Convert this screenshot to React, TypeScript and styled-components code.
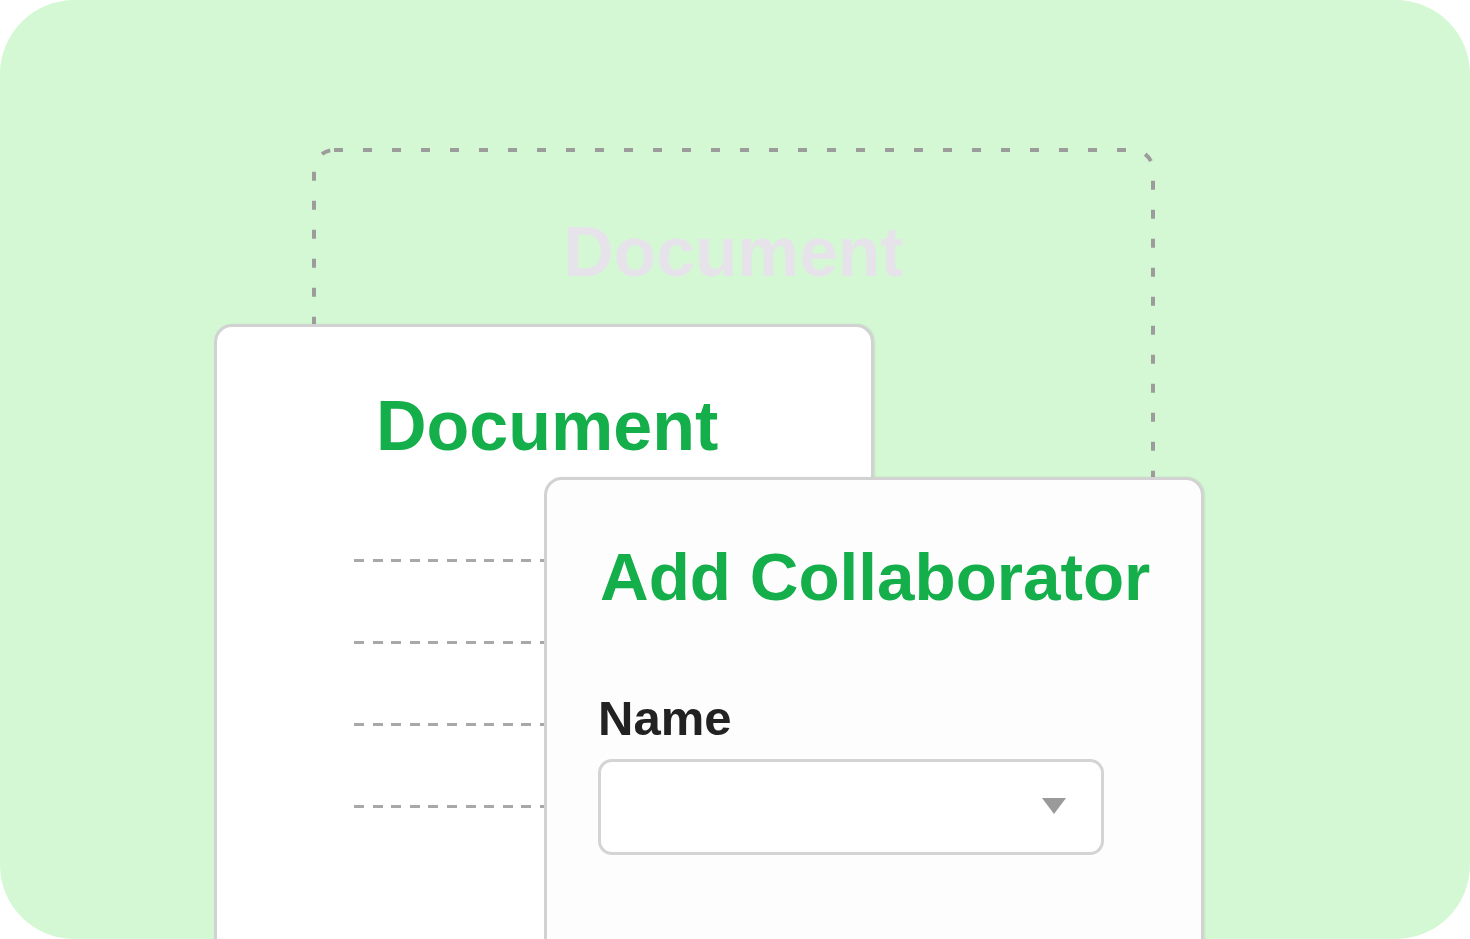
import styled, { createGlobalStyle } from "styled-components";

const GlobalStyle = createGlobalStyle`
  html, body {
    margin: 0;
    padding: 0;
    background: #ffffff;
  }
  * {
    box-sizing: border-box;
  }
`;

const Panel = styled.div`
  position: relative;
  width: 1470px;
  height: 939px;
  border-radius: 74px;
  background: #d4f8d4;
  overflow: hidden;
  padding: 148px 0 0 312px;
  font-family: "Liberation Sans", Arial, sans-serif;
`;

const Frame = styled.div`
  position: relative;
  width: 843px;
  height: 900px;
  display: flex;
  justify-content: center;
  padding-top: 70px;
`;

const FrameOutline = styled.svg`
  position: absolute;
  inset: 0;
  width: 100%;
  height: 100%;
  overflow: visible;
`;

const GhostTitle = styled.div`
  position: relative;
  font-size: 69.5px;
  line-height: 69.5px;
  font-weight: 700;
  color: #e7e3ea;
  height: 69.5px;
`;

const Card = styled.div<{ $left: number; $top: number; $bg: string }>`
  position: absolute;
  left: ${(p) => p.$left}px;
  top: ${(p) => p.$top}px;
  width: 660px;
  height: 720px;
  border: 3px solid #d2d2d2;
  border-radius: 18px;
  background: ${(p) => p.$bg};
  box-shadow: 1px 0 2px rgba(0, 0, 0, 0.08);
  display: flex;
  flex-direction: column;
`;

const DocCard = styled(Card)`
  padding: 64px 0 0 159px;
`;

const CollabCard = styled(Card)`
  padding: 63px 0 0 51px;
`;

const Heading = styled.h2<{ $size: number }>`
  margin: 0;
  font-size: ${(p) => p.$size}px;
  line-height: ${(p) => p.$size}px;
  font-weight: 700;
  color: #14ae4a;
  white-space: nowrap;
`;

const Lines = styled.div`
  display: flex;
  flex-direction: column;
  gap: 79px;
  margin: 98px 0 0 -22px;
`;

const DashLine = styled.div`
  width: 420px;
  height: 3px;
  background: repeating-linear-gradient(
    90deg,
    #a8a8a8 0 10px,
    transparent 10px 18.6px
  );
`;

const CollabHeading = styled(Heading)`
  margin-left: 2px;
`;

const Label = styled.div`
  margin-top: 84px;
  font-size: 49px;
  line-height: 48px;
  font-weight: 700;
  color: #222222;
`;

const Select = styled.div`
  margin-top: 17px;
  width: 506px;
  height: 96px;
  border: 3px solid #d4d4d4;
  border-radius: 14px;
  background: #ffffff;
  display: flex;
  align-items: center;
  justify-content: flex-end;
  padding: 0 35px 0 0;
`;

const Caret = styled.div`
  width: 0;
  height: 0;
  margin-top: -3px;
  border-left: 12px solid transparent;
  border-right: 12px solid transparent;
  border-top: 16px solid #9a9a9a;
`;

export default function App() {
  return (
    <>
      <GlobalStyle />
      <Panel>
        <Frame>
          <FrameOutline>
            <rect
              x="2"
              y="2"
              width="839"
              height="896"
              rx="20"
              fill="none"
              stroke="#9c9c9c"
              strokeWidth="4"
              strokeDasharray="9 20"
            />
          </FrameOutline>
          <GhostTitle>Document</GhostTitle>
        </Frame>

        <DocCard $left={214} $top={324} $bg="#ffffff">
          <Heading $size={70}>Document</Heading>
          <Lines>
            <DashLine />
            <DashLine />
            <DashLine />
            <DashLine />
          </Lines>
        </DocCard>

        <CollabCard $left={544} $top={477} $bg="#fdfdfd">
          <CollabHeading $size={67.4}>Add Collaborator</CollabHeading>
          <Label>Name</Label>
          <Select>
            <Caret />
          </Select>
        </CollabCard>
      </Panel>
    </>
  );
}
